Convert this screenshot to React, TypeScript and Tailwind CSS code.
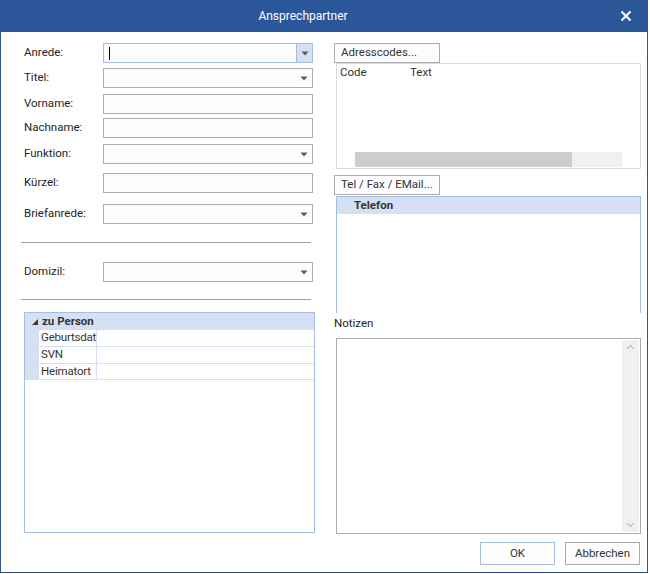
import React from "react";

const font = { fontFamily: "Roboto, 'Liberation Sans', sans-serif" };

function Arrow() {
  return (
    <svg width="8" height="5" viewBox="0 0 8 5" className="block">
      <path d="M0.5 0.5 H7.5 L4 4.5 Z" fill="#5a5a5a" />
    </svg>
  );
}

function Row({
  label,
  mt,
  combo,
  focused,
}: {
  label: string;
  mt: string;
  combo?: boolean;
  focused?: boolean;
}) {
  return (
    <div className={`flex items-center h-[20px] ${mt}`}>
      <div className="w-[82px] pl-[3px] text-[11.5px] text-[#1e1e1e] leading-none">{label}</div>
      <div
        className={`relative w-[210px] h-[20px] border ${
          focused ? "border-[#a3bde3]" : "border-[#acacac]"
        } bg-[#fcfcfc] flex items-center`}
      >
        {focused && <div className="ml-[5px] w-px h-[13px] bg-black" />}
        <div className="flex-1" />
        {combo && (
          <div
            className={`h-full w-[16px] flex items-center justify-center ${
              focused ? "bg-[#d5e1f2] border-l border-[#a3bde3]" : ""
            }`}
          >
            <Arrow />
          </div>
        )}
      </div>
    </div>
  );
}

function Btn({ children, className = "" }: { children: React.ReactNode; className?: string }) {
  return (
    <div
      className={`h-[20px] w-[106px] border border-[#acacac] bg-[#fdfdfd] text-[11.5px] text-[#333] flex items-center pl-[6px] leading-none ${className}`}
    >
      {children}
    </div>
  );
}

export default function App() {
  return (
    <div className="w-[650px] h-[574px] bg-white" style={font}>
      <div className="w-[648px] h-[573px] border-x border-b border-[#2b579a] bg-white flex flex-col">
        {/* Title bar */}
        <div className="h-[32px] bg-[#2b579a] flex items-center -mx-px">
          <div className="flex-1 text-center text-white text-[12px] leading-none pl-[2px]">Ansprechpartner</div>
          <div className="w-[44px] flex items-center justify-center">
            <svg width="12" height="12" viewBox="0 0 12 12">
              <path d="M1.5 1.5 L10.5 10.5 M10.5 1.5 L1.5 10.5" stroke="white" strokeWidth="2.2" />
            </svg>
          </div>
        </div>

        {/* Content */}
        <div className="flex pl-[20px]">
          {/* Left column */}
          <div className="w-[294px] flex flex-col">
            <Row label="Anrede:" mt="mt-[11px]" combo focused />
            <Row label="Titel:" mt="mt-[5px]" combo />
            <Row label="Vorname:" mt="mt-[6px]" />
            <Row label="Nachname:" mt="mt-[4px]" />
            <Row label="Funktion:" mt="mt-[6px]" combo />
            <Row label="Kürzel:" mt="mt-[9px]" />
            <Row label="Briefanrede:" mt="mt-[11px]" combo />
            <div className="mt-[18px] h-px w-[290px] bg-[#a0a0a0]" />
            <Row label="Domizil:" mt="mt-[19px]" combo />
            <div className="mt-[17px] h-px w-[290px] bg-[#a0a0a0]" />

            {/* Property grid */}
            <div className="mt-[12px] ml-[3px] w-[291px] h-[221px] border border-[#a3bde3] flex flex-col text-[11.5px] leading-none">
              <div className="h-[17px] bg-[#d5e1f2] flex items-center">
                <div className="w-[17px] flex justify-center pl-[3px]">
                  <svg width="6" height="6" viewBox="0 0 6 6">
                    <path d="M6 0 V6 H0 Z" fill="#3a3a3a" />
                  </svg>
                </div>
                <span className="font-bold text-[#333]">zu Person</span>
              </div>
              {["Geburtsdat", "SVN", "Heimatort"].map((t, i) => (
                <div key={t} className={`${i === 0 ? "h-[17px]" : "h-[16.5px]"} flex`}>
                  <div className="w-[14px] bg-[#d5e1f2]" />
                  <div className="w-[58px] border-r border-b border-[#d5e1f2] flex items-center pl-[2px] whitespace-nowrap text-[#333] tracking-[-0.2px]">
                    {t}
                  </div>
                  <div className="flex-1 border-b border-[#d5e1f2]" />
                </div>
              ))}
            </div>
          </div>

          {/* Right column */}
          <div className="ml-[19px] w-[307px] flex flex-col">
            <Btn className="mt-[11px]">Adresscodes...</Btn>
            <div className="ml-[2px] w-[305px] h-[106px] border border-[#dcdcdc] flex flex-col">
              <div className="flex text-[11.5px] text-[#333] leading-none pt-[3px]">
                <span className="pl-[3px] w-[73px]">Code</span>
                <span>Text</span>
              </div>
              <div className="flex-1" />
              <div className="ml-[18px] mb-px w-[267px] h-[15px] bg-[#f0f0f0] flex">
                <div className="w-[217px] h-full bg-[#cdcdcd]" />
              </div>
            </div>
            <Btn className="mt-[6px]">Tel / Fax / EMail...</Btn>
            <div className="mt-px ml-[2px] w-[305px] h-[117px] border-x border-t border-[#a3bde3] flex flex-col">
              <div className="h-[17px] bg-[#d5e1f2] flex items-center pl-[17px] text-[11.5px] font-bold text-[#333] leading-none">
                Telefon
              </div>
            </div>
            <div className="h-[22px] flex items-center text-[11.5px] text-[#1e1e1e] leading-none">Notizen</div>
            <div className="mt-[3px] ml-[2px] w-[305px] h-[196px] border border-[#acacac] flex">
              <div className="flex-1" />
              <div className="w-[17px] my-px mr-px bg-[#f0f0f0] flex flex-col items-center justify-between py-[4px]">
                <svg width="9" height="6" viewBox="0 0 9 6">
                  <path d="M1 5 L4.5 1.5 L8 5" stroke="#c2c2c2" strokeWidth="1.3" fill="none" />
                </svg>
                <svg width="9" height="6" viewBox="0 0 9 6">
                  <path d="M1 1 L4.5 4.5 L8 1" stroke="#c2c2c2" strokeWidth="1.3" fill="none" />
                </svg>
              </div>
            </div>
            <div className="mt-[8px] flex justify-end gap-[10px] pr-[1px]">
              <div className="w-[75px] h-[23px] border border-[#a3bde3] bg-[#fdfdfd] text-[11.5px] text-[#333] flex items-center justify-center leading-none">
                OK
              </div>
              <div className="w-[75px] h-[23px] border border-[#acacac] bg-[#fdfdfd] text-[11.5px] text-[#333] flex items-center justify-center leading-none">
                Abbrechen
              </div>
            </div>
          </div>
        </div>
      </div>
    </div>
  );
}
